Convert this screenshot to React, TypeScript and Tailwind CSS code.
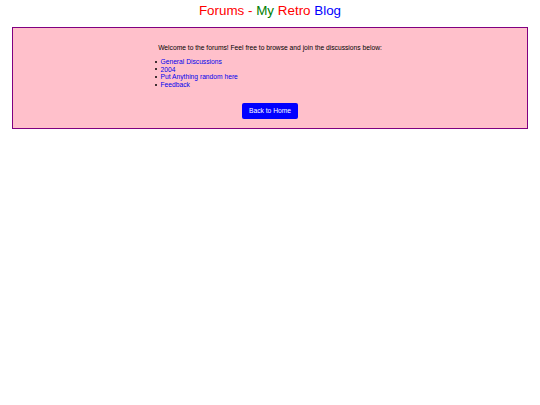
import React from "react";

const links = ["General Discussions", "2004", "Put Anything random here", "Feedback"];

export default function App() {
  return (
    <div className="min-h-[405px] bg-white pt-[3px] text-black" style={{ fontFamily: '"Liberation Sans", Arial, sans-serif' }}>
      <h1 className="text-center text-[13.4px] leading-[16px] font-normal">
        <span className="text-[#ff0000]">Forums - </span>
        <span className="text-[#008000]">My </span>
        <span className="text-[#ff0000]">Retro </span>
        <span className="text-[#0000ff]">Blog</span>
      </h1>
      <div className="mx-[12px] mt-[8px] h-[102px] border border-[#800080] bg-[#ffc0cb] pt-[16px]">
        <div className="mx-auto w-[230px] text-[6.7px] leading-[8px]">
          <p className="whitespace-nowrap text-center">Welcome to the forums! Feel free to browse and join the discussions below:</p>
          <ul className="mt-[6px] list-none pl-0 leading-[7.6px]">
            {links.map((l) => (
              <li key={l} className="flex items-center">
                <span className="mr-[3.5px] h-[2px] w-[2px] rounded-full bg-black" />
                <a className="text-[#0000ee]" href="#">{l}</a>
              </li>
            ))}
          </ul>
        </div>
        <div className="mt-[15px] flex justify-center">
          <button className="h-[16px] w-[56px] rounded-[2px] bg-[#0000ff] text-[6.7px] leading-[16px] text-white">Back to Home</button>
        </div>
      </div>
    </div>
  );
}
